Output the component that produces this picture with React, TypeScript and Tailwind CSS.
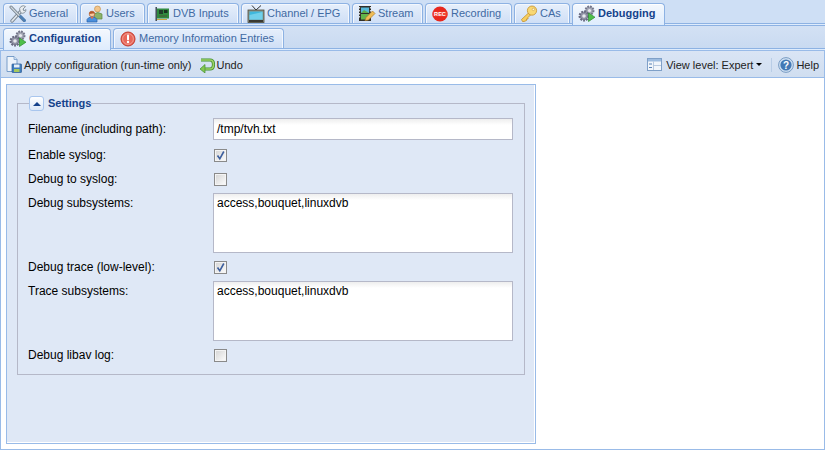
import { ReactNode } from "react"

const WrenchIcon = () => (
  <svg width="18" height="18" viewBox="0 0 18 18">
    <path d="M3 16 L13 5" stroke="#7d8a96" strokeWidth="3.4" strokeLinecap="round" />
    <path d="M3 16 L13 5" stroke="#e4e8ec" strokeWidth="1.6" strokeLinecap="round" />
    <path d="M11 6 A3.6 3.6 0 0 1 16.5 1.6 L14 4 L15 6 L17 4.5 A3.6 3.6 0 0 1 12 8 Z" fill="#e8ecef" stroke="#77848f" strokeWidth="0.8" />
    <path d="M2 2 L15 15.5" stroke="#6d7b88" strokeWidth="3" strokeLinecap="round" />
    <path d="M2 2 L15 15.5" stroke="#cfd6dc" strokeWidth="1.4" strokeLinecap="round" />
    <path d="M11.5 11.5 L15.5 15.5" stroke="#4d7fb5" strokeWidth="3" strokeLinecap="round" />
  </svg>
)

const UsersIcon = () => (
  <svg width="18" height="18" viewBox="0 0 18 18">
    <circle cx="11.5" cy="4" r="3" fill="#f3c58a" stroke="#c08a3f" strokeWidth="0.6" />
    <path d="M8 9 Q11.5 6 16 9 V14 H9 Z" fill="#8db36a" stroke="#5e8b40" strokeWidth="0.7" />
    <circle cx="6" cy="9" r="2.8" fill="#f6c9a0" stroke="#a8572b" strokeWidth="0.7" />
    <path d="M6 6.2 Q3 6.4 3.4 9 Q6 8 8.6 8.6 Q8.6 6.4 6 6.2Z" fill="#b3562a" />
    <path d="M1 17 V14.5 Q2 12 6 12 Q10 12 11 14.5 V17 Z" fill="#4b8fdc" stroke="#2b62a8" strokeWidth="0.7" />
    <path d="M4.5 12 L6 14 L7.5 12 Z" fill="#f06a3a" />
  </svg>
)

const CardIcon = () => (
  <svg width="14" height="16" viewBox="0 0 14 16">
    <rect x="0.5" y="1" width="1.4" height="14" fill="#35414a" />
    <rect x="2" y="2.5" width="12" height="10" fill="#2f8a3e" />
    <rect x="4" y="4" width="4" height="4" fill="#20402a" />
    <rect x="9" y="4" width="3.5" height="3" fill="#17331f" />
    <rect x="4" y="9" width="8" height="2" fill="#3d6f3a" />
    <path d="M2 13 H12 V14 H2 Z" fill="#c9a63e" />
  </svg>
)

const TvIcon = () => (
  <svg width="18" height="18" viewBox="0 0 18 18">
    <path d="M5 0.5 L9 5 L14 0.5" fill="none" stroke="#333" strokeWidth="1" />
    <rect x="1" y="5" width="16" height="12.5" fill="#8f9488" stroke="#4a4a3a" strokeWidth="0.8" />
    <rect x="2.5" y="6.5" width="13" height="8" fill="#3fb8dc" />
    <path d="M2.5 10 L15.5 7 V14.5 H2.5Z" fill="#71d0ea" />
    <rect x="2" y="15" width="14" height="2" fill="#3a3a32" />
  </svg>
)

const FilmIcon = () => (
  <svg width="18" height="18" viewBox="0 0 18 18">
    <rect x="1" y="1" width="12" height="15" fill="#2f2f2a" />
    <rect x="3" y="2.5" width="8" height="5.5" fill="#55b8d8" />
    <path d="M3 8 L6 5 L11 8Z" fill="#5cae4a" />
    <rect x="3" y="9" width="8" height="5.5" fill="#62b54b" />
    <path d="M1.6 2 v1.5 M1.6 5 v1.5 M1.6 8 v1.5 M1.6 11 v1.5 M12.4 2 v1.5 M12.4 5 v1.5 M12.4 8 v1.5 M12.4 11 v1.5" stroke="#fff" strokeWidth="0.9" />
    <path d="M7 15.5 L8 12.5 L14.5 6 L17 8.5 L10.5 15 Z" fill="#f0bd55" stroke="#a9772a" strokeWidth="0.7" />
  </svg>
)

const RecIcon = () => (
  <svg width="16" height="16" viewBox="0 0 16 16">
    <circle cx="8" cy="8" r="7.6" fill="#e8281e" />
    <rect x="0.6" y="5.6" width="14.8" height="4.8" fill="#ef3a2c" />
    <text x="8" y="10" textAnchor="middle" fontSize="5.6" fontWeight="700" fill="#fff" className="font-['Liberation_Sans',sans-serif]">REC</text>
  </svg>
)

const KeyIcon = () => (
  <svg width="18" height="18" viewBox="0 0 18 18">
    <path d="M1.5 14.5 L9 7.5 L11 9.5 L8 12.5 L8 14 L6.5 14 L6.5 15.5 L4 16.5 L2.5 16.5 Z" fill="#f6cf62" stroke="#c4902c" strokeWidth="0.8" strokeLinejoin="round" />
    <circle cx="12" cy="5.6" r="4.6" fill="#f9d873" stroke="#c4902c" strokeWidth="0.8" />
    <circle cx="13.4" cy="4.4" r="1.2" fill="#fff5cf" stroke="#c4902c" strokeWidth="0.5" />
  </svg>
)

const GearsIcon = () => (
  <svg width="18" height="18" viewBox="0 0 18 18">
    <circle cx="11.5" cy="5.5" r="4" fill="#a3a6b4" stroke="#74768a" strokeWidth="2" strokeDasharray="1.7 1" />
    <circle cx="11.5" cy="5.5" r="1.6" fill="#e6e8ee" />
    <circle cx="6" cy="11" r="4.4" fill="#8f92a4" stroke="#686a80" strokeWidth="2.2" strokeDasharray="1.8 1.1" />
    <circle cx="6" cy="11" r="1.8" fill="#e6e8ee" />
    <path d="M10.5 8 L17 12.2 L10.5 16.5 Z" fill="#4fc04a" stroke="#2e8a30" strokeWidth="0.7" strokeLinejoin="round" />
  </svg>
)

const ErrorIcon = () => (
  <svg width="16" height="16" viewBox="0 0 16 16">
    <circle cx="8" cy="8" r="7" fill="#e8675a" stroke="#c4392b" strokeWidth="1" />
    <circle cx="8" cy="8" r="5.4" fill="none" stroke="#f4a79c" strokeWidth="0.8" />
    <rect x="7" y="3.6" width="2" height="5.6" rx="0.8" fill="#fff" />
    <circle cx="8" cy="11" r="1.2" fill="#fff" />
  </svg>
)

const SaveIcon = () => (
  <svg width="16" height="17" viewBox="0 0 16 17" className="shrink-0">
    <path d="M1 0.5 H8 L11 3.5 V15.5 H1 Z" fill="#eef4fb" stroke="#6b94c4" strokeWidth="0.9" />
    <path d="M8 0.5 V3.5 H11" fill="#cfe0f3" stroke="#6b94c4" strokeWidth="0.7" />
    <rect x="6" y="8" width="9.5" height="8.5" rx="0.6" fill="#3f7dbd" stroke="#2c5a94" strokeWidth="0.7" />
    <rect x="8" y="8.5" width="5.5" height="3" fill="#e8f0f8" />
    <rect x="8" y="13" width="5.5" height="3" fill="#a7c95f" />
  </svg>
)

const UndoIcon = () => (
  <svg width="16" height="16" viewBox="0 0 16 16" className="shrink-0">
    <path d="M2 3 H11 Q14.5 3 14.5 7.5 Q14.5 12 11 12 H5" fill="none" stroke="#3f8f2f" strokeWidth="3.2" />
    <path d="M2 3 H11 Q14.5 3 14.5 7.5 Q14.5 12 11 12 H5" fill="none" stroke="#9ed266" strokeWidth="1.6" />
    <path d="M6 7.5 L1 12 L6 16 Z" fill="#86c751" stroke="#3f8f2f" strokeWidth="0.7" />
  </svg>
)

const ViewIcon = () => (
  <svg width="15" height="13" viewBox="0 0 15 13" className="shrink-0">
    <rect x="0.5" y="0.5" width="14" height="12" fill="#f2f6fb" stroke="#7fa0c8" />
    <rect x="1" y="1" width="13" height="2.5" fill="#9dbce0" />
    <path d="M2 6 H5 M2 9.5 H5" stroke="#5b83b5" strokeWidth="1" />
    <path d="M6.5 3.5 V12" stroke="#a9bfd9" strokeWidth="0.8" />
    <path d="M6.5 7.5 H14" stroke="#a9bfd9" strokeWidth="0.8" />
  </svg>
)

const HelpIcon = () => (
  <svg width="16" height="16" viewBox="0 0 16 16" className="shrink-0">
    <circle cx="8" cy="8" r="7.4" fill="#cfe0f2" stroke="#6f94bd" strokeWidth="0.9" />
    <circle cx="8" cy="8" r="5.6" fill="#4379b5" />
    <text x="8" y="11.6" textAnchor="middle" fontSize="10" fontWeight="700" fill="#fff" className="font-['Liberation_Sans',sans-serif]">?</text>
  </svg>
)

function Tab({ icon, label, width, active }: { icon: ReactNode; label: string; width: string; active?: boolean }) {
  return (
    <div
      className={`flex items-center gap-[2px] pl-[5px] rounded-t-[4px] border border-b-0 border-[#8db2e3] shrink-0 ${width} ${
        active
          ? "relative z-10 h-[22px] pb-[2px] -mb-[2px] bg-gradient-to-b from-[#f4f8fd] to-[#deecfd] font-bold text-[#15428b] shadow-[inset_0_1px_0_#fff]"
          : "h-[20px] bg-gradient-to-b from-[#e6effb] to-[#cfdff6] text-[#416aa3] shadow-[inset_1px_1px_0_#f3f7fd,inset_-1px_0_0_#f3f7fd]"
      }`}
    >
      <span className="w-[18px] h-[18px] flex items-center justify-center shrink-0">{icon}</span>
      <span className="whitespace-nowrap -mt-[2px]">{label}</span>
    </div>
  )
}

function Check({ checked }: { checked?: boolean }) {
  return (
    <div className="w-[13px] h-[13px] ml-px border border-[#8a8a8a] bg-gradient-to-br from-[#d4d4d4] to-[#fdfdfd] shadow-[inset_0_0_0_1px_#f4f4f4] flex items-center justify-center">
      {checked && (
        <svg width="11" height="11" viewBox="0 0 11 11">
          <path d="M2.5 5.5 L4.8 8.8 L8.8 1.5" fill="none" stroke="#3d5f9e" strokeWidth="1.6" />
        </svg>
      )}
    </div>
  )
}

function Row({ label, children, top }: { label: string; children: ReactNode; top?: boolean }) {
  return (
    <div className={`flex ${top ? "items-start" : "items-center h-6"}`}>
      <label className={`w-[185px] text-black ${top ? "pt-[3px]" : ""}`}>{label}</label>
      {children}
    </div>
  )
}

function Area({ value }: { value: string }) {
  return (
    <div className="w-[300px] h-[60px] border border-[#b5b8c8] bg-white bg-gradient-to-b from-[#eeeeee] to-white to-[6px] px-[3px] pt-[2px] text-black">
      {value}
    </div>
  )
}

export default function App() {
  return (
    <div className="w-[825px] h-[450px] overflow-hidden flex flex-col bg-white font-['Liberation_Sans',Arial,sans-serif] text-[12px] leading-[14px]">
      <div className="text-[11px] h-[24px] flex items-end gap-[2px] pl-[3px] bg-[#cedff5] border-b border-[#8db2e3] shrink-0">
        <Tab icon={<WrenchIcon />} label="General" width="w-[75px]" />
        <Tab icon={<UsersIcon />} label="Users" width="w-[65px]" />
        <Tab icon={<CardIcon />} label="DVB Inputs" width="w-[92px]" />
        <Tab icon={<TvIcon />} label="Channel / EPG" width="w-[109px]" />
        <Tab icon={<FilmIcon />} label="Stream" width="w-[71px]" />
        <Tab icon={<RecIcon />} label="Recording" width="w-[87px]" />
        <Tab icon={<KeyIcon />} label="CAs" width="w-[56px]" />
        <Tab icon={<GearsIcon />} label="Debugging" width="w-[93px]" active />
      </div>
      <div className="h-px bg-[#deecfd] shrink-0" />
      <div className="text-[11px] h-[24px] flex items-end gap-[2px] pl-[3px] bg-gradient-to-b from-[#d3e1f4] to-[#c9daf1] border-y border-[#8db2e3] shrink-0">
        <Tab icon={<GearsIcon />} label="Configuration" width="w-[108px]" active />
        <Tab icon={<ErrorIcon />} label="Memory Information Entries" width="w-[171px]" />
      </div>
      <div className="h-px bg-[#deecfd] shrink-0" />
      <div className="text-[11px] h-[28px] flex items-center pl-[5px] pr-[5px] pt-px border border-[#99bbe8] bg-gradient-to-b from-[#dae5f5] to-[#d0def0] text-[#222] shrink-0">
        <SaveIcon />
        <span className="ml-[2px]">Apply configuration (run-time only)</span>
        <span className="ml-[7px] flex items-center gap-[2px]">
          <UndoIcon />
          Undo
        </span>
        <div className="ml-auto flex items-center">
          <ViewIcon />
          <span className="ml-[4px]">View level: Expert</span>
          <span className="ml-[3px] w-0 h-0 border-x-[3px] border-x-transparent border-t-[3px] border-t-black" />
          <span className="ml-[9px] mr-[6px] w-px h-[14px] bg-[#b9cde6]" />
          <HelpIcon />
          <span className="ml-[2px]">Help</span>
        </div>
      </div>
      <div className="flex-1 min-h-0 border-x border-b border-[#99bbe8] pl-[5px] pt-[6px] flex">
        <div className="w-[530px] h-[360px] border border-[#99bbe8] shadow-[inset_-1px_-1px_0_#fff] bg-[#dfe8f6] px-[10px] pt-[11px]">
          <fieldset className="border border-[#b5b8c8] pl-[10px] pr-[11px] pb-[7px]">
            <legend className="ml-px flex items-center gap-[4px] h-[15px] font-bold text-[11px] text-[#15428b]">
              <span className="w-[15px] h-[15px] rounded-[3px] border border-[#a9c6ee] bg-gradient-to-b from-white to-[#dce8f8] flex items-center justify-center">
                <span className="w-0 h-0 border-x-[4px] border-x-transparent border-b-[4px] border-b-[#15428b]" />
              </span>
              <span className="-mt-[2px]">Settings</span>
            </legend>
            <div className="flex flex-col pt-[7px]">
              <div className="flex items-center h-[22px] mb-[3px]">
                <label className="w-[185px] text-black">Filename (including path):</label>
                <div className="w-[300px] h-[22px] border border-[#b5b8c8] bg-white bg-gradient-to-b from-[#eeeeee] to-white to-[6px] px-[3px] flex items-center text-black">
                  /tmp/tvh.txt
                </div>
              </div>
              <Row label="Enable syslog:"><Check checked /></Row>
              <Row label="Debug to syslog:"><Check /></Row>
              <div className="h-[2px]" />
              <Row label="Debug subsystems:" top><Area value="access,bouquet,linuxdvb" /></Row>
              <div className="h-[2px]" />
              <Row label="Debug trace (low-level):"><Check checked /></Row>
              <div className="h-[2px]" />
              <Row label="Trace subsystems:" top><Area value="access,bouquet,linuxdvb" /></Row>
              <div className="h-[2px]" />
              <Row label="Debug libav log:"><Check /></Row>
            </div>
          </fieldset>
        </div>
      </div>
    </div>
  )
}
